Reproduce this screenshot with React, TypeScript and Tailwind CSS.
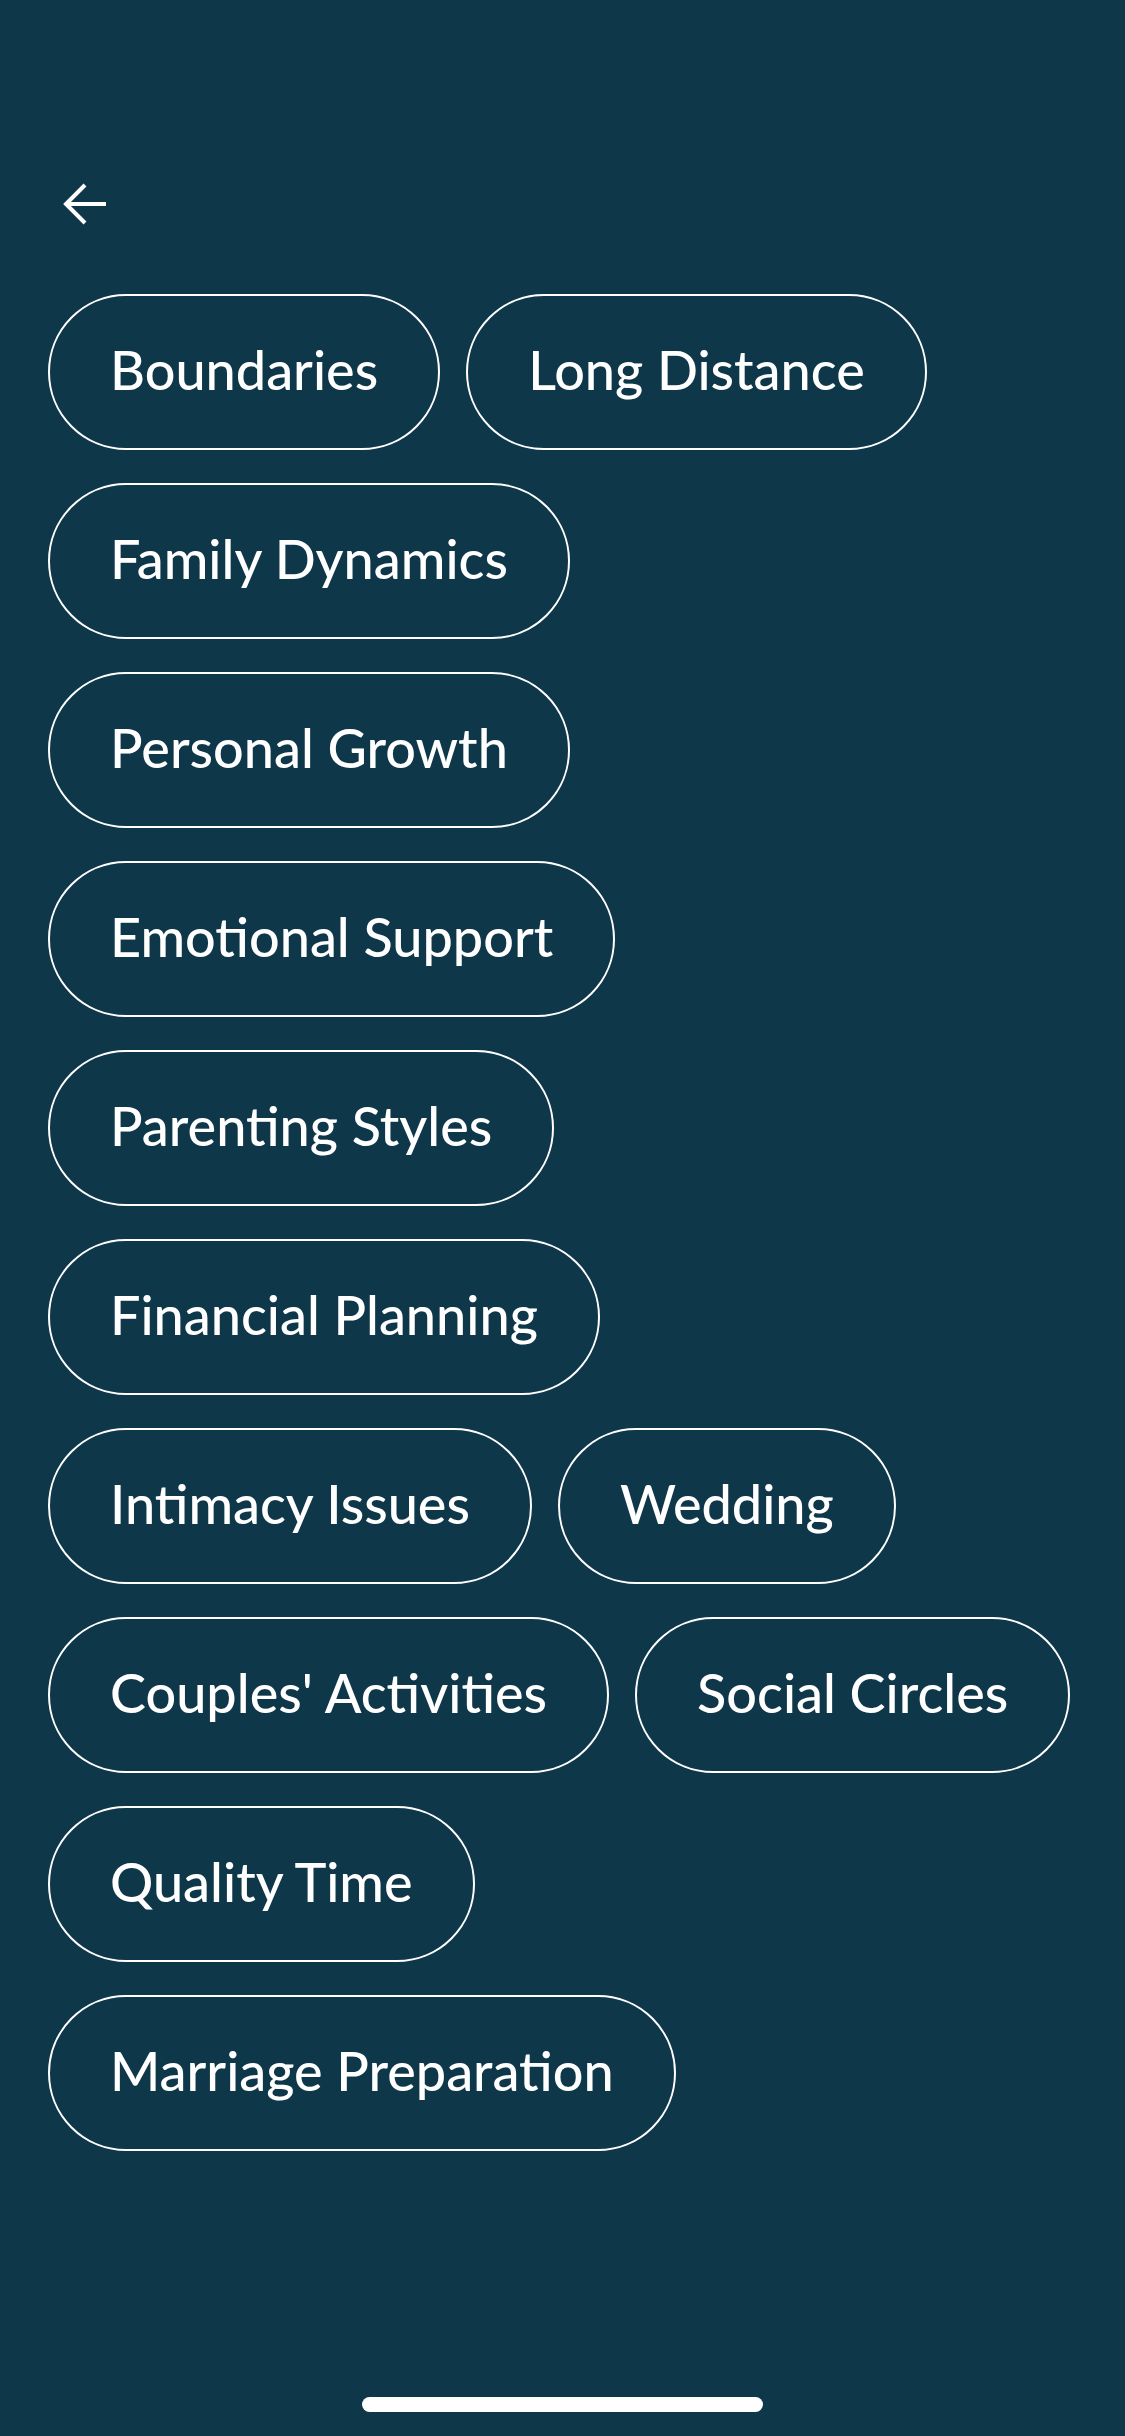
import React from "react";

const topics = [
  "Boundaries",
  "Long Distance",
  "Family Dynamics",
  "Personal Growth",
  "Emotional Support",
  "Parenting Styles",
  "Financial Planning",
  "Intimacy Issues",
  "Wedding",
  "Couples' Activities",
  "Social Circles",
  "Quality Time",
  "Marriage Preparation",
];

export default function App() {
  return (
    <div
      className="relative w-[1125px] h-[2436px] bg-[#0f374a] text-white overflow-hidden"
      style={{ fontFamily: "Lato, 'Open Sans', sans-serif" }}
    >
      <div className="pt-[183px] pl-[62px]">
        <svg width="44" height="42" viewBox="0 0 44 42" fill="none" stroke="white" strokeWidth="4" strokeLinecap="butt">
          <path d="M44 21H4" />
          <path d="M23 2L4 21L23 40" />
        </svg>
      </div>
      <div className="mt-[69px] px-[48px] flex flex-wrap gap-x-[26px] gap-y-[33px]">
        {topics.map((t) => (
          <div
            key={t}
            className="h-[156px] px-[60px] flex items-center justify-center rounded-full border-2 border-white text-[54px] font-medium leading-none whitespace-nowrap"
          >
            <span className="-mt-[4px]">{t}</span>
          </div>
        ))}
      </div>
      <div className="absolute left-[362px] top-[2397px] w-[401px] h-[15px] rounded-full bg-white" />
    </div>
  );
}
